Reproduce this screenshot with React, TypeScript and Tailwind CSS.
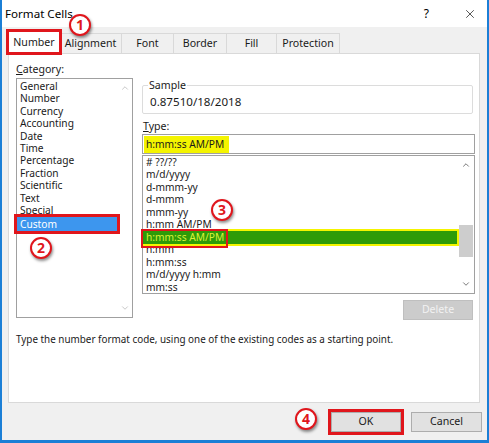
import { ChevronDown, ChevronUp, X } from 'lucide-react';

const categories = [
	'General',
	'Number',
	'Currency',
	'Accounting',
	'Date',
	'Time',
	'Percentage',
	'Fraction',
	'Scientific',
	'Text',
	'Special',
	'Custom',
];

const types = [
	'# ??/??',
	'm/d/yyyy',
	'd-mmm-yy',
	'd-mmm',
	'mmm-yy',
	'h:mm AM/PM',
	'h:mm:ss AM/PM',
	'h:mm',
	'h:mm:ss',
	'm/d/yyyy h:mm',
	'mm:ss',
];

const tabs = [
	{ label: 'Alignment', w: 'w-[62px]' },
	{ label: 'Font', w: 'w-[52px]' },
	{ label: 'Border', w: 'w-[53px]' },
	{ label: 'Fill', w: 'w-[50px]' },
	{ label: 'Protection', w: 'w-[63px]' },
];

function Marker({ n, className }: { n: number; className: string }) {
	return (
		<div
			className={`absolute w-[22px] h-[22px] rounded-full border-2 border-[#e0161c] bg-white flex items-center justify-center text-[14px] font-bold text-[#e0161c] leading-none shadow-[1px_2px_3px_rgba(0,0,0,0.45)] ${className}`}
		>
			{n}
		</div>
	);
}

export default function App() {
	return (
		<div
			className="relative w-[489px] h-[443px] flex flex-col bg-[#f0f0f0] border-x-2 border-b-[3px] border-[#1b7fd6] text-[10.2px] text-[#1a1a1a]"
			style={{ fontFamily: '"Segoe UI", "Noto Sans", sans-serif' }}
		>
			{/* title bar */}
			<div className="h-[27px] bg-white flex items-center pl-[3px] pr-[10px]">
				<span className="text-[11.6px] text-black">Format Cells</span>
				<span className="ml-auto mr-[34px] text-[12px] text-black">?</span>
				<X className="w-[14px] h-[14px] text-[#222]" strokeWidth={1.3} />
			</div>

			{/* tabs */}
			<div className="h-[26px] flex items-end pl-[6px] text-[10.6px]">
				<div className="w-[52px] h-[22px] bg-white border border-b-0 border-[#d9d9d9] flex items-center justify-center outline-[3px] outline outline-[#e0161c] -outline-offset-1 relative z-10">
					Number
				</div>
				{tabs.map((t) => (
					<div
						key={t.label}
						className={`${t.w} h-[20px] border border-b-0 border-l-0 border-[#d9d9d9] flex items-center justify-center`}
					>
						{t.label}
					</div>
				))}
			</div>

			{/* panel */}
			<div className="ml-[6px] mr-[7px] h-[350px] bg-white border border-[#d9d9d9] pt-[8px] pl-[7px] pr-[4px] flex flex-col">
				<div className="flex">
					{/* category */}
					<div className="w-[117px] flex flex-col">
						<div className="h-[15px] leading-[15px] mb-[1px] text-[10.6px]">
							<span className="underline">C</span>ategory:
						</div>
						<div className="h-[240px] border border-[#a0a0a0] flex">
							<div className="flex-1 pt-[1px] pl-0">
								{categories.map((c) =>
									c === 'Custom' ? (
										<div
											key={c}
											className="h-[14px] leading-[14px] mt-[1px] pl-[3px] bg-[#3d96ee] text-white outline-[3px] outline outline-[#e0161c]"
										>
											{c}
										</div>
									) : (
										<div key={c} className="h-[12.4px] leading-[12.4px] pl-[3px]">
											{c}
										</div>
									)
								)}
							</div>
							<div className="w-[15px] flex flex-col items-center justify-between py-[4px]">
								<ChevronUp className="w-[10px] h-[10px] text-[#bdbdbd]" strokeWidth={2} />
								<ChevronDown className="w-[10px] h-[10px] text-[#bdbdbd]" strokeWidth={2} />
							</div>
						</div>
					</div>

					{/* right column */}
					<div className="ml-[9px] w-[333px] mt-[16px] flex flex-col">
						<fieldset className="w-[331px] h-[36px] border border-[#dcdcdc] rounded-[2px] pl-[5px]">
							<legend className="px-[1px] h-[15px] leading-[15px] text-[10.6px]">Sample</legend>
							<div className="mt-[1px] pl-[2px] leading-[15px] text-[11.6px]">0.87510/18/2018</div>
						</fieldset>
						<div className="mt-[5px] h-[15px] leading-[15px] pl-[1px] text-[10.6px]">
							<span className="underline">T</span>ype:
						</div>
						<div className="h-[20px] border border-[#a0a0a0] flex items-center px-[1px]">
							<span className="bg-[#f4f400] h-[17px] leading-[17px] px-[2px] pr-[5px]">
								h:mm:ss AM/PM
							</span>
						</div>
						<div className="mt-[1px] h-[139px] border border-[#a0a0a0] flex">
							<div className="flex-1 pt-0">
								{types.map((t) =>
									t === 'h:mm:ss AM/PM' ? (
										<div
											key={t}
											className="h-[13px] leading-[13px] mt-[1px] mb-[-1px] bg-[#2e9b08] shadow-[0_0_0_2px_#f4f400] relative"
										>
											<span className="inline-block h-[15px] leading-[13px] -mt-[1px] pl-[3px] pr-[2px] text-[#d9f03a] outline-[2px] outline outline-[#e0161c]">
												{t}
											</span>
										</div>
									) : (
										<div key={t} className="h-[12.4px] leading-[12.4px] pl-[3px]">
											{t}
										</div>
									)
								)}
							</div>
							<div className="w-[17px] flex flex-col items-center py-[4px]">
								<ChevronUp className="w-[10px] h-[10px] text-[#606060]" strokeWidth={2} />
								<div className="w-[14px] h-[32px] bg-[#cdcdcd] mt-[55px]" />
								<ChevronDown className="w-[10px] h-[10px] text-[#606060] mt-auto" strokeWidth={2} />
							</div>
						</div>
						<div className="mt-[6px] self-end mr-[2px] w-[70px] h-[20px] bg-[#cccccc] border border-[#bfbfbf] flex items-center justify-center text-[#f2f2f2] text-[10.6px]">
							Delete
						</div>
					</div>
				</div>

				<div className="mt-[12px] h-[15px] leading-[15px] text-[9.9px]">
					Type the number format code, using one of the existing codes as a starting point.
				</div>
			</div>

			{/* footer */}
			<div className="flex-1 flex items-start justify-end pt-[9px] pr-[5px] gap-[10px] text-[10.6px]">
				<div className="w-[70px] h-[20px] bg-[#e1e1e1] border border-[#adadad] flex items-center justify-center outline-[3px] outline outline-[#e0161c] outline-offset-0">
					OK
				</div>
				<div className="w-[71px] h-[20px] bg-[#e1e1e1] border border-[#adadad] flex items-center justify-center">
					Cancel
				</div>
			</div>

			<Marker n={1} className="left-[67px] top-[14px]" />
			<Marker n={2} className="left-[28px] top-[237px]" />
			<Marker n={3} className="left-[209px] top-[199px]" />
			<Marker n={4} className="left-[293px] top-[408px]" />
		</div>
	);
}
